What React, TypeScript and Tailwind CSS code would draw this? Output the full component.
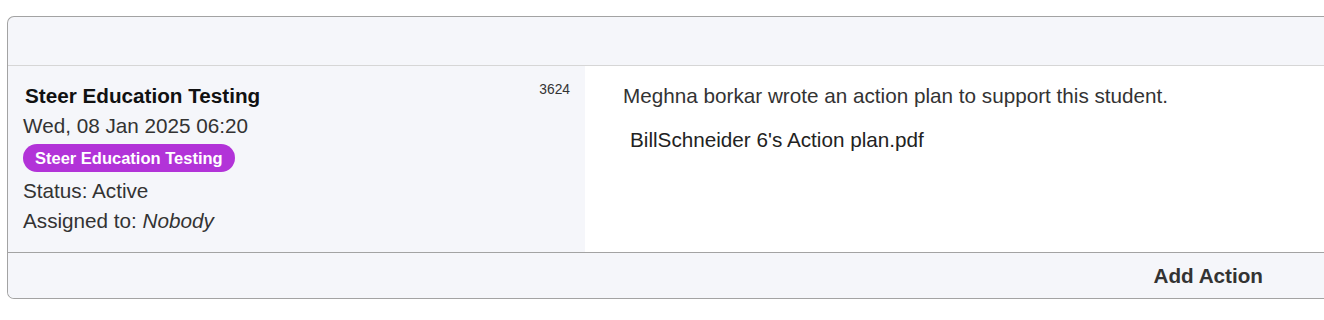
import React from "react";

export default function App() {
  return (
    <div className="w-[1324px] h-[320px] overflow-hidden bg-white pt-[16px] pl-[7px]" style={{ fontFamily: '"Liberation Sans", Arial, sans-serif' }}>
      <div className="w-[1340px] border border-r-0 border-[#a3a3a3] rounded-l-[7px] overflow-hidden bg-[#f5f6fa]">
        <div className="h-[49px] border-b border-[#d6d6d6]" />
        <div className="flex h-[186px]">
          <div className="w-[577px] bg-[#f5f6fa] pl-[15px] pr-[15px] pt-[15px] relative">
            <div className="absolute right-[15px] top-[16px] text-[13.8px] leading-[16px] text-[#333]">3624</div>
            <div className="text-[20.7px] leading-[30px] font-bold text-[#111] pl-[2px]">Steer Education Testing</div>
            <div className="text-[20.7px] leading-[30px] text-[#333]">Wed, 08 Jan 2025 06:20</div>
            <div className="mt-[3px] mb-[4px] h-[28px]">
              <span className="inline-block h-[28px] rounded-full bg-[#b233d8] px-[12px] text-[16.5px] leading-[28px] font-bold text-white">Steer Education Testing</span>
            </div>
            <div className="text-[20.7px] leading-[30px] text-[#333]">Status: Active</div>
            <div className="text-[20.7px] leading-[30px] text-[#333]">Assigned to: <i>Nobody</i></div>
          </div>
          <div className="flex-1 bg-white pl-[38px] pt-[15px]">
            <div className="text-[20.7px] leading-[30px] text-[#333]">Meghna borkar wrote an action plan to support this student.</div>
            <div className="mt-[14px] pl-[7px] text-[20.7px] leading-[30px] text-[#222]">BillSchneider 6's Action plan.pdf</div>
          </div>
        </div>
        <div className="h-[46px] border-t border-[#a3a3a3] bg-[#f5f6fa] flex items-center justify-end pr-[84px]">
          <span className="text-[20.7px] font-bold text-[#333]">Add Action</span>
        </div>
      </div>
    </div>
  );
}
